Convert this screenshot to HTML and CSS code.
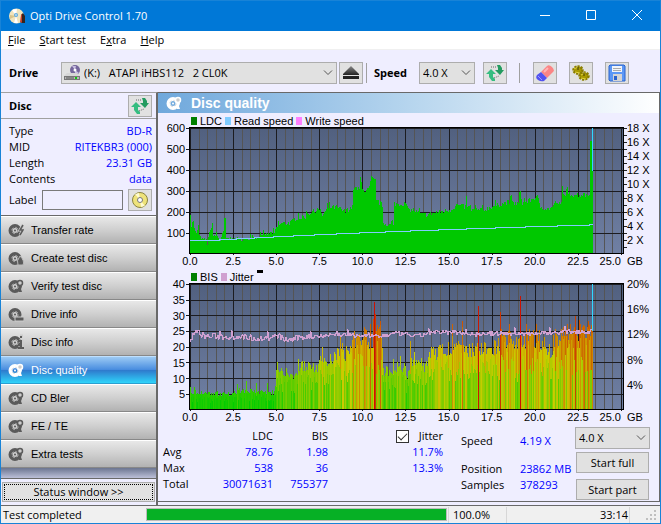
FILE: index.html
```html
<!DOCTYPE html>
<html lang="en">
<head>
  <meta charset="UTF-8">
  <meta name="viewport" content="width=device-width, initial-scale=1.0">
  <title>Opti Drive Control 1.70</title>
  <link rel="stylesheet" href="styles.css">
</head>
<body>
  <!-- Shared icons -->
  <svg class="defs" width="0" height="0">
    <linearGradient id="metal" x2="0" y2="1">
      <stop stop-color="#888"/>
      <stop offset="1" stop-color="#222"/>
    </linearGradient>
    <symbol id="disc" viewBox="0 0 16 16">
      <circle cx="7" cy="8.500" r="4.500" fill="none" stroke="currentColor" stroke-width="4"/>
      <circle cx="7" cy="8.500" r="3.200" fill="none" stroke="#ccc" stroke-width=".7" stroke-dasharray="3 2"/>
      <circle cx="7" cy="8.500" r="1" fill="currentColor"/>
    </symbol>
    <symbol id="disc-search" viewBox="0 0 16 16">
      <use href="#disc"/>
      <circle cx="12" cy="5" r="2.500" fill="#ccc" stroke="currentColor" stroke-width="1.500"/>
      <path d="M11 8h3l-1 3 1 3h-3z" fill="currentColor"/>
    </symbol>
    <symbol id="refresh" viewBox="0 0 18 18">
      <path d="M0 10l5-5 5 5H7v3l2 2v2H6l-3-4v-3z" fill="#35bd80"/>
      <path d="M18 6l-4 5-5-5h3V4l-1-3h3l2 3v2z" fill="#239b60"/>
      <path d="M5 3h5M8 14l5-2" stroke="#666" stroke-dasharray="1 1"/>
    </symbol>
  </svg>

  <header class="titlebar">
    <svg class="app-icon" viewBox="0 0 16 16">
      <circle cx="7.500" cy="8" r="7.500" fill="#f0e4bd"/>
      <path d="M7 8L3 2a7 7 0 0 1 5-1zM7 8l2 7H5z" fill="#fff"/>
      <path d="M7 8L1 7v4z" fill="#d8c48a"/>
      <circle cx="7" cy="7" r="2" fill="#5aa9e0"/>
      <circle cx="7" cy="7" r=".8" fill="#fff"/>
      <path d="M12 15V7l2-2 2 3v7z" fill="#33241f"/>
      <path d="M11 14l1-7 1-1v9z" fill="#c2402c"/>
    </svg>
    <h1>Opti Drive Control 1.70</h1>
    <div class="window-buttons">
      <button aria-label="Minimize"><svg viewBox="0 0 10 10"><path d="M0 5.500h10"/></svg></button>
      <button aria-label="Maximize"><svg viewBox="0 0 10 10"><path d="M.5.500h9v9h-9z"/></svg></button>
      <button aria-label="Close"><svg viewBox="0 0 10 10"><path d="M0 0l10 10M10 0L0 10"/></svg></button>
    </div>
  </header>

  <nav class="menu">
    <a href="#"><u>F</u>ile</a>
    <a href="#"><u>S</u>tart test</a>
    <a href="#">E<u>x</u>tra</a>
    <a href="#"><u>H</u>elp</a>
  </nav>

  <div class="toolbar">
    <label class="drive-label" for="drive">Drive</label>
    <div class="select drive">
      <svg class="drive-icon" viewBox="0 0 16 16">
        <circle cx="11" cy="5" r="5" fill="#75679c"/>
        <path d="M11 5L8 1h4zM11 5l4 3-4 2z" fill="#c7bde0"/>
        <circle cx="11" cy="5" r="1.500" fill="#fff"/>
        <path d="M3 8h10l3 3H0z" fill="#d6d6d6"/>
        <path d="M0 11h16v4H0z" fill="#777"/>
        <path d="M1 12h14v2H1z" fill="#b8b8b8"/>
        <path d="M2 13h8" stroke="#555"/>
        <path d="M11 12h2v2h-2z" fill="#10c810"/>
      </svg>
      <select id="drive"><option>(K:)&nbsp;&nbsp; ATAPI iHBS112&nbsp;&nbsp; 2 CL0K</option></select>
      <svg class="chevron" viewBox="0 0 10 6"><path d="M1 .5l4 4 4-4"/></svg>
    </div>
    <button class="tool eject" aria-label="Eject">
      <svg viewBox="0 0 18 18"><path d="M9 2l8 8v1H1v-1z" fill="url(#metal)"/><path d="M1 12h16v3H1z" fill="#222"/></svg>
    </button>
    <span class="separator"></span>
    <label class="speed-label" for="speed">Speed</label>
    <div class="select speed">
      <select id="speed"><option>4.0 X</option></select>
      <svg class="chevron" viewBox="0 0 10 6"><path d="M1 .5l4 4 4-4"/></svg>
    </div>
    <button class="tool" aria-label="Refresh speed"><svg><use href="#refresh"/></svg></button>
    <span class="separator wide"></span>
    <div class="tools">
      <button class="tool" aria-label="Erase">
        <svg viewBox="0 0 18 18">
          <path d="M5 8l6-6q2-2 5 1t1 5l-6 6z" fill="#fb8585"/>
          <path d="M5 8l6 6-3 3q-3 1-6-1t-1-5z" fill="#5252f0"/>
          <path d="M2 12l4 4" stroke="#9a9aff"/>
          <path d="M8 8l4-4" stroke="#ffb5b5" stroke-width="2"/>
        </svg>
      </button>
      <button class="tool" aria-label="Options">
        <svg viewBox="0 0 18 18">
          <g fill="#a89a00" stroke="#8a7d00">
            <ellipse cx="6" cy="6" rx="4.500" ry="3.500" stroke-dasharray="2 1" stroke-width="2.500"/>
            <ellipse cx="12" cy="12" rx="4.500" ry="3.500" stroke-dasharray="2 1" stroke-width="2.500"/>
          </g>
          <path d="M2 5l4-2M9 11l4-2M3 8l5 1M9 14l5 1" stroke="#e0d23a"/>
          <path d="M6 3v3M12 9v3" stroke="#443d00"/>
        </svg>
      </button>
      <button class="tool" aria-label="Save">
        <svg viewBox="0 0 18 18">
          <path d="M2 1h14l1 1v15H2l-1-1V2z" fill="#5b97f5" stroke="#2b62cc"/>
          <path d="M4 2h10v6H4z" fill="#f0f4fa"/>
          <path d="M5 4.500h8M5 6.500h8" stroke="#aaa"/>
          <path d="M5 10h9v7H5z" fill="#d4d4d4"/>
          <path d="M6 12h3v4H6z" fill="#2b62cc"/>
        </svg>
      </button>
    </div>
  </div>

  <div class="workspace">
    <aside class="sidebar">
      <div class="disc-head">
        <h2>Disc</h2>
        <button class="tool" aria-label="Refresh disc"><svg><use href="#refresh"/></svg></button>
      </div>
      <dl class="disc-info">
        <dt>Type</dt><dd>BD-R</dd>
        <dt>MID</dt><dd>RITEKBR3 (000)</dd>
        <dt>Length</dt><dd>23.31 GB</dd>
        <dt>Contents</dt><dd>data</dd>
      </dl>
      <div class="disc-label">
        <label for="discLabel">Label</label>
        <input type="text" id="discLabel">
        <button class="tool" aria-label="Read label">
          <svg viewBox="0 0 18 18">
            <circle cx="9" cy="9" r="7.500" fill="#eee37a" stroke="#8b8540"/>
            <path d="M9 9L4 3l4-1zM9 9l5 6-4 1z" fill="#fffbd0"/>
            <circle cx="9" cy="9" r="2.500" fill="#fff" stroke="#777"/>
          </svg>
        </button>
      </div>
      <nav class="tests">
        <button><svg><use href="#disc"/><path d="M15 3l-3 5h3l-3 5" fill="none" stroke="#ccc" stroke-width="3"/><path d="M15 3l-3 5h3l-3 5" fill="none" stroke="currentColor" stroke-width="1.500"/></svg>Transfer rate</button>
        <button><svg><use href="#disc"/><path d="M12 6q5 5 3 9h-5q-2-4 2-9z" fill="currentColor" stroke="#bbb"/></svg>Create test disc</button>
        <button><svg><use href="#disc-search"/></svg>Verify test disc</button>
        <button><svg><use href="#disc"/><path d="M7 11h9v4H7z" fill="currentColor" stroke="#ccc"/></svg>Drive info</button>
        <button><svg><use href="#disc"/><path d="M12 2h3M11 7h3v7M10 14h6" fill="none" stroke="#ccc" stroke-width="3"/><path d="M12 3h2M11 7h2v7M10 14h6" fill="none" stroke="currentColor" stroke-width="2"/></svg>Disc info</button>
        <button class="active"><svg><use href="#disc-search"/></svg>Disc quality</button>
        <button><svg><use href="#disc-search"/></svg>CD Bler</button>
        <button><svg><use href="#disc-search"/></svg>FE / TE</button>
        <button><svg><use href="#disc-search"/></svg>Extra tests</button>
      </nav>
      <div class="filler"></div>
      <button class="status-toggle">Status window &gt;&gt;</button>
    </aside>

    <main class="panel">
      <h2 class="panel-title"><svg><use href="#disc-search"/></svg>Disc quality</h2>

      <section class="chart">
        <div class="legend">
          <i class="key green"></i>LDC
          <i class="key sky"></i>Read speed
          <i class="key pink"></i>Write speed
        </div>
        <div class="axis left"><span>600</span><span>500</span><span>400</span><span>300</span><span>200</span><span>100</span><span></span></div>
        <svg class="plot" id="ldcPlot" viewBox="0 0 435 127" preserveAspectRatio="none"></svg>
        <div class="axis right"><span>18 X</span><span>16 X</span><span>14 X</span><span>12 X</span><span>10 X</span><span>8 X</span><span>6 X</span><span>4 X</span><span>2 X</span><span></span></div>
        <div class="axis bottom"><span>0.0</span><span>2.5</span><span>5.0</span><span>7.5</span><span>10.0</span><span>12.5</span><span>15.0</span><span>17.5</span><span>20.0</span><span>22.5</span><span>25.0</span></div>
        <div class="unit">GB</div>
      </section>

      <section class="chart">
        <div class="legend">
          <i class="key green"></i>BIS
          <i class="key plum"></i>Jitter
          <i class="dash"></i>
        </div>
        <div class="axis left"><span>40</span><span>35</span><span>30</span><span>25</span><span>20</span><span>15</span><span>10</span><span>5</span><span></span></div>
        <svg class="plot" id="bisPlot" viewBox="0 0 435 127" preserveAspectRatio="none"></svg>
        <div class="axis right"><span>20%</span><span>16%</span><span>12%</span><span>8%</span><span>4%</span><span></span></div>
        <div class="axis bottom"><span>0.0</span><span>2.5</span><span>5.0</span><span>7.5</span><span>10.0</span><span>12.5</span><span>15.0</span><span>17.5</span><span>20.0</span><span>22.5</span><span>25.0</span></div>
        <div class="unit">GB</div>
      </section>

      <section class="results">
        <table>
          <tr><th></th><th>LDC</th><th>BIS</th><th><label class="jitter"><input type="checkbox" checked>Jitter</label></th></tr>
          <tr><th>Avg</th><td>78.76</td><td>1.98</td><td>11.7%</td></tr>
          <tr><th>Max</th><td>538</td><td>36</td><td>13.3%</td></tr>
          <tr><th>Total</th><td>30071631</td><td>755377</td><td></td></tr>
        </table>
        <dl class="progress-info">
          <dt>Speed</dt><dd>4.19 X</dd>
          <dt>Position</dt><dd>23862 MB</dd>
          <dt>Samples</dt><dd>378293</dd>
        </dl>
        <div class="actions">
          <div class="select">
            <select aria-label="Test speed"><option>4.0 X</option></select>
            <svg class="chevron" viewBox="0 0 10 6"><path d="M1 .5l4 4 4-4"/></svg>
          </div>
          <button>Start full</button>
          <button>Start part</button>
        </div>
      </section>
    </main>
  </div>

  <footer class="statusbar">
    <span class="message">Test completed</span>
    <progress value="100" max="100" aria-label="Test progress"></progress>
    <span class="percent">100.0%</span>
    <span class="time">33:14</span>
    <svg class="grip" viewBox="0 0 10 10"><path d="M8 0h2v2H8zM4 4h2v2H4zM8 4h2v2H8zM0 8h2v2H0zM4 8h2v2H4zM8 8h2v2H8z"/></svg>
  </footer>

  <script src="charts.js"></script>
</body>
</html>
```

FILE: styles.css
```css
* {
  box-sizing: border-box;
}
body {
  margin: 0;
  min-height: 100vh;
  display: flex;
  flex-direction: column;
  border: 1px solid #1883d7;
  background-color: #efeeff;
  color: #000;
  font-family: "Open Sans", "Noto Sans", sans-serif;
  font-size: 11px;
  line-height: 16px;
}
h1, h2, dl, dd {
  margin: 0;
}
button, select, input {
  font: inherit;
  color: inherit;
}
button {
  padding: 0;
  border: 1px solid #adadad;
  background-color: #e1e1e1;
}
.defs {
  position: absolute;
}

/* Title bar and menu */
.titlebar {
  display: flex;
  align-items: center;
  height: 30px;
  padding-left: 8px;
  background-color: #0078d7;
  color: #fff;
}
.app-icon {
  width: 16px;
  height: 16px;
}
.titlebar h1 {
  flex: 1;
  margin-left: 5px;
  font-size: 11px;
  font-weight: normal;
}
.window-buttons {
  display: flex;
}
.window-buttons button {
  width: 46px;
  height: 28px;
  border: none;
  background: none;
}
.window-buttons svg {
  width: 10px;
  height: 10px;
  fill: none;
  stroke: #fff;
}
.menu {
  display: flex;
  gap: 14px;
  height: 19px;
  padding: 1px 7px;
  border-bottom: 1px solid #f0f0f0;
  background-color: #fff;
}
.menu a {
  color: #000;
  text-decoration: none;
}

/* Toolbar */
.toolbar {
  display: flex;
  align-items: center;
  height: 42px;
  padding: 3px 31px 0 8px;
}
.toolbar label {
  font-weight: bold;
}
.drive-label {
  width: 52px;
}
.speed-label {
  width: 45px;
}
.select {
  display: grid;
  align-items: center;
  height: 22px;
}
.select > * {
  grid-area: 1 / 1;
}
.select select {
  appearance: none;
  width: 100%;
  height: 22px;
  padding: 0 4px 0 3px;
  border: 1px solid #adadad;
  border-radius: 0;
  background-color: #e1e1e1;
}
.select.drive {
  flex: 1;
}
.drive select {
  padding-left: 22px;
}
.drive-icon {
  z-index: 1;
  width: 16px;
  height: 16px;
  margin-left: 3px;
}
.chevron {
  justify-self: end;
  width: 10px;
  height: 6px;
  margin-right: 4px;
  fill: none;
  stroke: #555;
  pointer-events: none;
}
.select.speed {
  width: 56px;
  margin-right: 8px;
}
.tool {
  display: flex;
  align-items: center;
  justify-content: center;
  flex: none;
  width: 24px;
  height: 22px;
}
.tool svg {
  width: 18px;
  height: 18px;
}
.eject {
  margin: 0 3px 0 2px;
}
.separator {
  width: 2px;
  height: 20px;
  margin-right: 6px;
  border-left: 1px solid #a0a0a0;
}
.separator.wide {
  margin: 0 12px;
}
.tools {
  display: flex;
  gap: 12px;
}

/* Sidebar */
.workspace {
  flex: 1;
  display: grid;
  grid-template-columns: 157px 1fr;
}
.sidebar {
  display: flex;
  flex-direction: column;
  border-top: 1px solid #a0a0a0;
  border-right: 2px solid #696969;
}
.disc-head {
  display: flex;
  align-items: center;
  justify-content: space-between;
  height: 26px;
  padding: 0 4px 0 8px;
  border-bottom: 1px solid #a0a0a0;
}
.disc-head h2 {
  font-size: 11px;
}
.disc-info {
  display: grid;
  grid-template-columns: auto auto;
  padding: 4px 4px 0 8px;
}
.disc-info dd {
  text-align: right;
}
dd, td {
  color: #0000ff;
}
.disc-label {
  display: flex;
  align-items: center;
  height: 28px;
  padding: 0 4px 2px 8px;
}
.disc-label input {
  flex: 1;
  min-width: 0;
  height: 20px;
  margin: 0 5px 0 5px;
  border: 1px solid #7a7a7a;
  background-color: #efeeff;
}
.tests {
  display: flex;
  flex-direction: column;
  border-top: 1px solid #696969;
}
.tests button {
  display: flex;
  align-items: center;
  gap: 7px;
  height: 28px;
  padding-left: 7px;
  border: none;
  border-top: 1px solid #fff;
  border-bottom: 1px solid #888;
  background-image: linear-gradient(#e8e8e8, #cfcfcf 50%, #b2b2b2);
  font-family: "Liberation Sans", Arial, sans-serif;
  font-size: 11px;
}
.tests svg {
  width: 16px;
  height: 16px;
  color: #5a5a5a;
}
.tests .active {
  border-top-color: #bfe0ff;
  border-bottom-color: #2a9fd0;
  background-image: linear-gradient(#9ccaf4, #4a8ee0 48%, #2f78cc 50%, #2fd4fa);
  color: #fff;
}
.tests .active svg {
  color: #fff;
}
.filler {
  flex: 1;
  background-image: linear-gradient(#6b7590, #bcc0d8);
  border-bottom: 1px solid #696969;
}
.status-toggle {
  height: 20px;
  margin: 3px 1px;
  border: 1px solid #adadad;
  outline: 1px dotted #000;
  outline-offset: -3px;
}

/* Disc quality panel */
.panel {
  border: 1px solid #696969;
  border-left: none;
  margin-bottom: 3px;
}
.panel-title {
  display: flex;
  align-items: center;
  gap: 9px;
  height: 20px;
  padding-left: 8px;
  background-image: linear-gradient(to right, #6fa8dc, #b6d5ee 50%, #fff);
  color: #fff;
  font-family: "Liberation Sans", Arial, sans-serif;
  font-size: 14px;
}
.panel-title svg {
  width: 16px;
  height: 16px;
}
.chart {
  display: grid;
  grid-template-columns: 31px 1fr 35px;
  grid-template-rows: 14px 127px 15px;
  font-family: "Liberation Sans", Arial, sans-serif;
  font-size: 11px;
  line-height: 14px;
}
.legend {
  grid-column: 2 / 4;
  display: flex;
  align-items: center;
  gap: 3px;
  padding: 1px 0 0 2px;
}
.key {
  width: 6px;
  height: 8px;
}
.green { background-color: #008000; }
.sky { background-color: #80ccff; }
.pink { background-color: #ff80ff; }
.plum { background-color: #d0a0d0; }
.dash {
  align-self: flex-start;
  width: 6px;
  height: 3px;
  background-color: #000;
}
.plot {
  width: 100%;
  height: 127px;
  overflow: visible;
  background-image: linear-gradient(#51607f, #7080a4);
  shape-rendering: crispEdges;
}
.axis {
  display: flex;
  justify-content: space-between;
}
.axis.left, .axis.right {
  flex-direction: column;
  height: 127px;
}
.axis.left span, .axis.right span {
  height: 1px;
  line-height: 3px;
}
.axis.left {
  padding-right: 4px;
  text-align: right;
}
.axis.right {
  padding-left: 3px;
}
.axis.bottom {
  grid-column: 2;
  padding: 0 3px 0 1px;
}
.axis.bottom span {
  display: flex;
  justify-content: center;
  width: 0;
}
.axis.bottom span:last-child {
  justify-content: flex-end;
}
.unit {
  padding-left: 3px;
}

/* Results */
.results {
  display: flex;
  align-items: flex-start;
  padding: 2px 9px 1px 5px;
}
table {
  margin-top: 1px;
  border-collapse: collapse;
}
th, td {
  height: 16px;
  padding: 0;
  font-weight: normal;
  text-align: right;
}
th:first-child {
  width: 40px;
  text-align: left;
}
th:nth-child(2) {
  width: 70px;
}
th:nth-child(3) {
  width: 55px;
}
th:nth-child(4) {
  width: 115px;
}
.jitter {
  display: flex;
  align-items: center;
  justify-content: flex-end;
  gap: 10px;
}
.jitter input {
  width: 13px;
  height: 13px;
  margin: 0;
  appearance: none;
  border: 1px solid #333;
  background-color: #fff;
}
.jitter input:checked::before {
  content: "";
  display: block;
  width: 8px;
  height: 4px;
  margin: 2px 1px;
  border: solid #333;
  border-width: 0 0 1px 1px;
  transform: rotate(-45deg);
}
.progress-info {
  display: grid;
  grid-template-columns: 59px auto;
  margin-left: 18px;
  padding-top: 6px;
}
.progress-info dt:first-child, .progress-info dd:nth-child(2) {
  margin-bottom: 12px;
}
.actions {
  display: flex;
  flex-direction: column;
  gap: 3px;
  width: 75px;
  margin-left: auto;
}
.actions button {
  height: 21px;
  margin: 0 1px;
}
.actions button:last-child {
  margin-top: 3px;
}

/* Status bar */
.statusbar {
  display: flex;
  align-items: center;
  height: 18px;
  padding: 0 4px 0 2px;
  border-top: 1px solid #696969;
  background-color: #f0f0f0;
}
.message {
  width: 143px;
}
progress {
  appearance: none;
  flex: 1;
  height: 13px;
  border: 1px solid #bcbcbc;
}
progress::-webkit-progress-bar {
  background-color: #e6e6e6;
}
progress::-webkit-progress-value {
  background-color: #06b025;
}
.percent {
  width: 58px;
  margin-left: 1px;
  padding-left: 4px;
  border-left: 1px solid #d7d7d7;
}
.time {
  width: 124px;
  padding-right: 1px;
  border: solid #d7d7d7;
  border-width: 0 1px;
  text-align: right;
}
.grip {
  width: 10px;
  height: 10px;
  margin-left: 16px;
  fill: #bfbfbf;
}
```

FILE: charts.js
```js
const SVG_NS = 'http://www.w3.org/2000/svg';
const WIDTH = 435;
const HEIGHT = 127;
const DISC_END = 403;

// [x, height] pairs in plot units, interpolated between
const ldcPoints = [
  [0, 35], [1, 27], [3, 33], [4, 24], [6, 19], [8, 27], [9, 17], [12, 14], [16, 13], [17, 9], [18, 16], [21, 26], [22, 30],
  [23, 17], [27, 17], [30, 13], [33, 21], [34, 35], [35, 35], [36, 14], [42, 16], [45, 13], [52, 13], [60, 15],
  [69, 16], [70, 22], [71, 17], [80, 20], [84, 20], [86, 25], [90, 29], [99, 30], [106, 35], [116, 36], [120, 41],
  [129, 43], [132, 38], [138, 45], [146, 46], [155, 41], [162, 46], [163, 65], [169, 64], [170, 75], [172, 66],
  [175, 60], [179, 66], [181, 75], [185, 72], [186, 52], [192, 48], [193, 30], [203, 27], [204, 49], [216, 49],
  [218, 43], [223, 43], [233, 38], [243, 40], [260, 43], [266, 48], [275, 46], [276, 56], [277, 47], [281, 43],
  [293, 43], [310, 49], [319, 51], [321, 59], [322, 50], [328, 49], [330, 61], [332, 50], [347, 56], [350, 46],
  [358, 44], [365, 47], [371, 50], [372, 66], [374, 57], [377, 64], [378, 59], [390, 58], [399, 58], [400, 112],
  [401, 112], [402, 82], [403, 82]
];
const bisPoints = [
  [0, 17], [40, 15], [50, 19], [60, 18], [84, 16], [86, 34], [105, 33], [108, 42], [128, 42], [130, 47], [145, 50],
  [148, 55], [160, 58], [162, 66], [178, 70], [187, 74], [192, 60], [193, 38], [213, 42], [218, 34], [222, 48],
  [228, 54], [234, 42], [240, 56], [260, 60], [280, 61], [300, 58], [315, 70], [330, 69], [348, 70], [360, 58],
  [366, 73], [385, 77], [403, 78]
];
const bisSpikes = {
  0: 22, 4: 22, 47: 25, 56: 28, 66: 26, 77: 26, 87: 47, 91: 41, 96: 41, 108: 50, 132: 62, 150: 72, 152: 66,
  164: 78, 174: 82, 175: 80, 180: 85, 183: 90, 184: 107, 185: 95, 189: 82, 190: 88, 203: 50, 210: 53, 220: 68,
  262: 85, 272: 88, 288: 103, 310: 97, 311: 80, 319: 85, 330: 113, 336: 85, 346: 85, 380: 85, 385: 93,
  390: 85, 397: 82, 398: 88, 399: 84
};
const speedPoints = [
  [0, 13], [14, 13], [29, 14], [46, 15], [64, 16], [83, 17], [103, 18], [124, 19], [146, 20], [169, 21],
  [195, 22], [220, 23], [248, 24], [276, 25], [305, 26], [335, 27], [367, 28], [399, 29], [402, 30]
];
const jitterPoints = [
  [0, 68], [4, 77], [8, 77], [16, 73], [30, 73], [50, 73], [70, 71], [90, 73], [97, 69], [110, 72], [130, 74],
  [150, 75], [170, 74], [190, 73], [205, 76], [216, 75], [228, 73], [240, 77], [270, 77], [285, 75], [300, 76],
  [350, 76], [380, 78], [402, 78]
];

let seed = 7;
function random() {
  seed = (seed * 16807) % 2147483647;
  return seed / 2147483647;
}

function valueAt(points, x) {
  for (let i = 1; i < points.length; i++) {
    const [x1, y1] = points[i - 1];
    const [x2, y2] = points[i];
    if (x <= x2) {
      return y1 + (y2 - y1) * (x - x1) / (x2 - x1);
    }
  }
  return points[points.length - 1][1];
}

function addPath(svg, d, color, filled) {
  const path = document.createElementNS(SVG_NS, 'path');
  path.setAttribute('d', d);
  path.setAttribute('fill', filled ? color : 'none');
  if (!filled) {
    path.setAttribute('stroke', color);
  }
  svg.appendChild(path);
}

function bar(x, height) {
  return `M${x} ${HEIGHT - 1}v${-Math.round(height)}h1v${Math.round(height)}z`;
}

function drawGrid(svg, rows, rightTicks) {
  let minor = '';
  let major = '';
  for (let i = 0; i <= 50; i++) {
    const x = Math.round(i * 8.62) + 1;
    if (i % 5 === 0) {
      major += `M${x}.5 0v${HEIGHT + 1}`;
    } else {
      minor += `M${x}.5 0v${HEIGHT}`;
    }
  }
  addPath(svg, minor, '#555555');
  for (let i = 0; i < rows; i++) {
    major += `M-3 ${Math.round(i * 125.5 / rows) + 1}.5h${WIDTH + 3}`;
  }
  addPath(svg, major, '#1c1c20');

  let ticks = '';
  for (let i = 0; i < rightTicks; i++) {
    ticks += `M${WIDTH} ${Math.round(i * 126 / rightTicks) + 1}.5h3`;
  }
  addPath(svg, ticks, '#222222');
  addPath(svg, `M.5 ${HEIGHT}V.5H${WIDTH - 0.5}V${HEIGHT - 0.5}H0`, '#000000');
}

function drawLdc() {
  const svg = document.getElementById('ldcPlot');
  drawGrid(svg, 6, 18);

  let bars = '';
  for (let x = 0; x < DISC_END; x++) {
    const base = valueAt(ldcPoints, x);
    const noise = x > 398 ? 0 : (random() - 0.5) * (x < 86 ? 3 : 5) + (random() > 0.92 ? 4 : 0);
    bars += bar(x + 1, base + noise);
  }
  addPath(svg, bars, '#00c800', true);

  let line = `M1 ${HEIGHT - 13.5}`;
  speedPoints.forEach(([x, h]) => {
    line += `H${x + 1}V${HEIGHT - h - 0.5}`;
  });
  addPath(svg, line, '#80ccff');
  addPath(svg, 'M403.5 1V44', '#30d8ff');
}

function drawBis() {
  const svg = document.getElementById('bisPlot');
  drawGrid(svg, 8, 0);

  const color = h => `hsl(${Math.max(5, Math.round(128 - h * 1.17))}, 100%, 40%)`;
  for (let x = 0; x < DISC_END; x++) {
    const base = valueAt(bisPoints, x);
    const high = bisSpikes[x] || base + (random() - 0.5) * base * 0.3;
    addPath(svg, bar(x + 1, high), color(high), true);
    // second sample of the same column, drawn over the first one
    if (high < 92 && random() > 0.15) {
      const low = high * (0.45 + random() * 0.5);
      addPath(svg, bar(x + 1, low), color(low), true);
    }
  }

  let line = '';
  for (let x = 0; x < DISC_END; x++) {
    const h = valueAt(jitterPoints, x) + (random() - 0.5) * (x < 130 ? 6 : 4) + (random() > 0.97 ? 4 : 0);
    line += `${x ? 'L' : 'M'}${x + 1} ${HEIGHT - Math.round(h) - 0.5}`;
  }
  addPath(svg, line, '#d0a0d0');
  addPath(svg, 'M403.5 1V48', '#30d8ff');
}

drawLdc();
drawBis();
```
